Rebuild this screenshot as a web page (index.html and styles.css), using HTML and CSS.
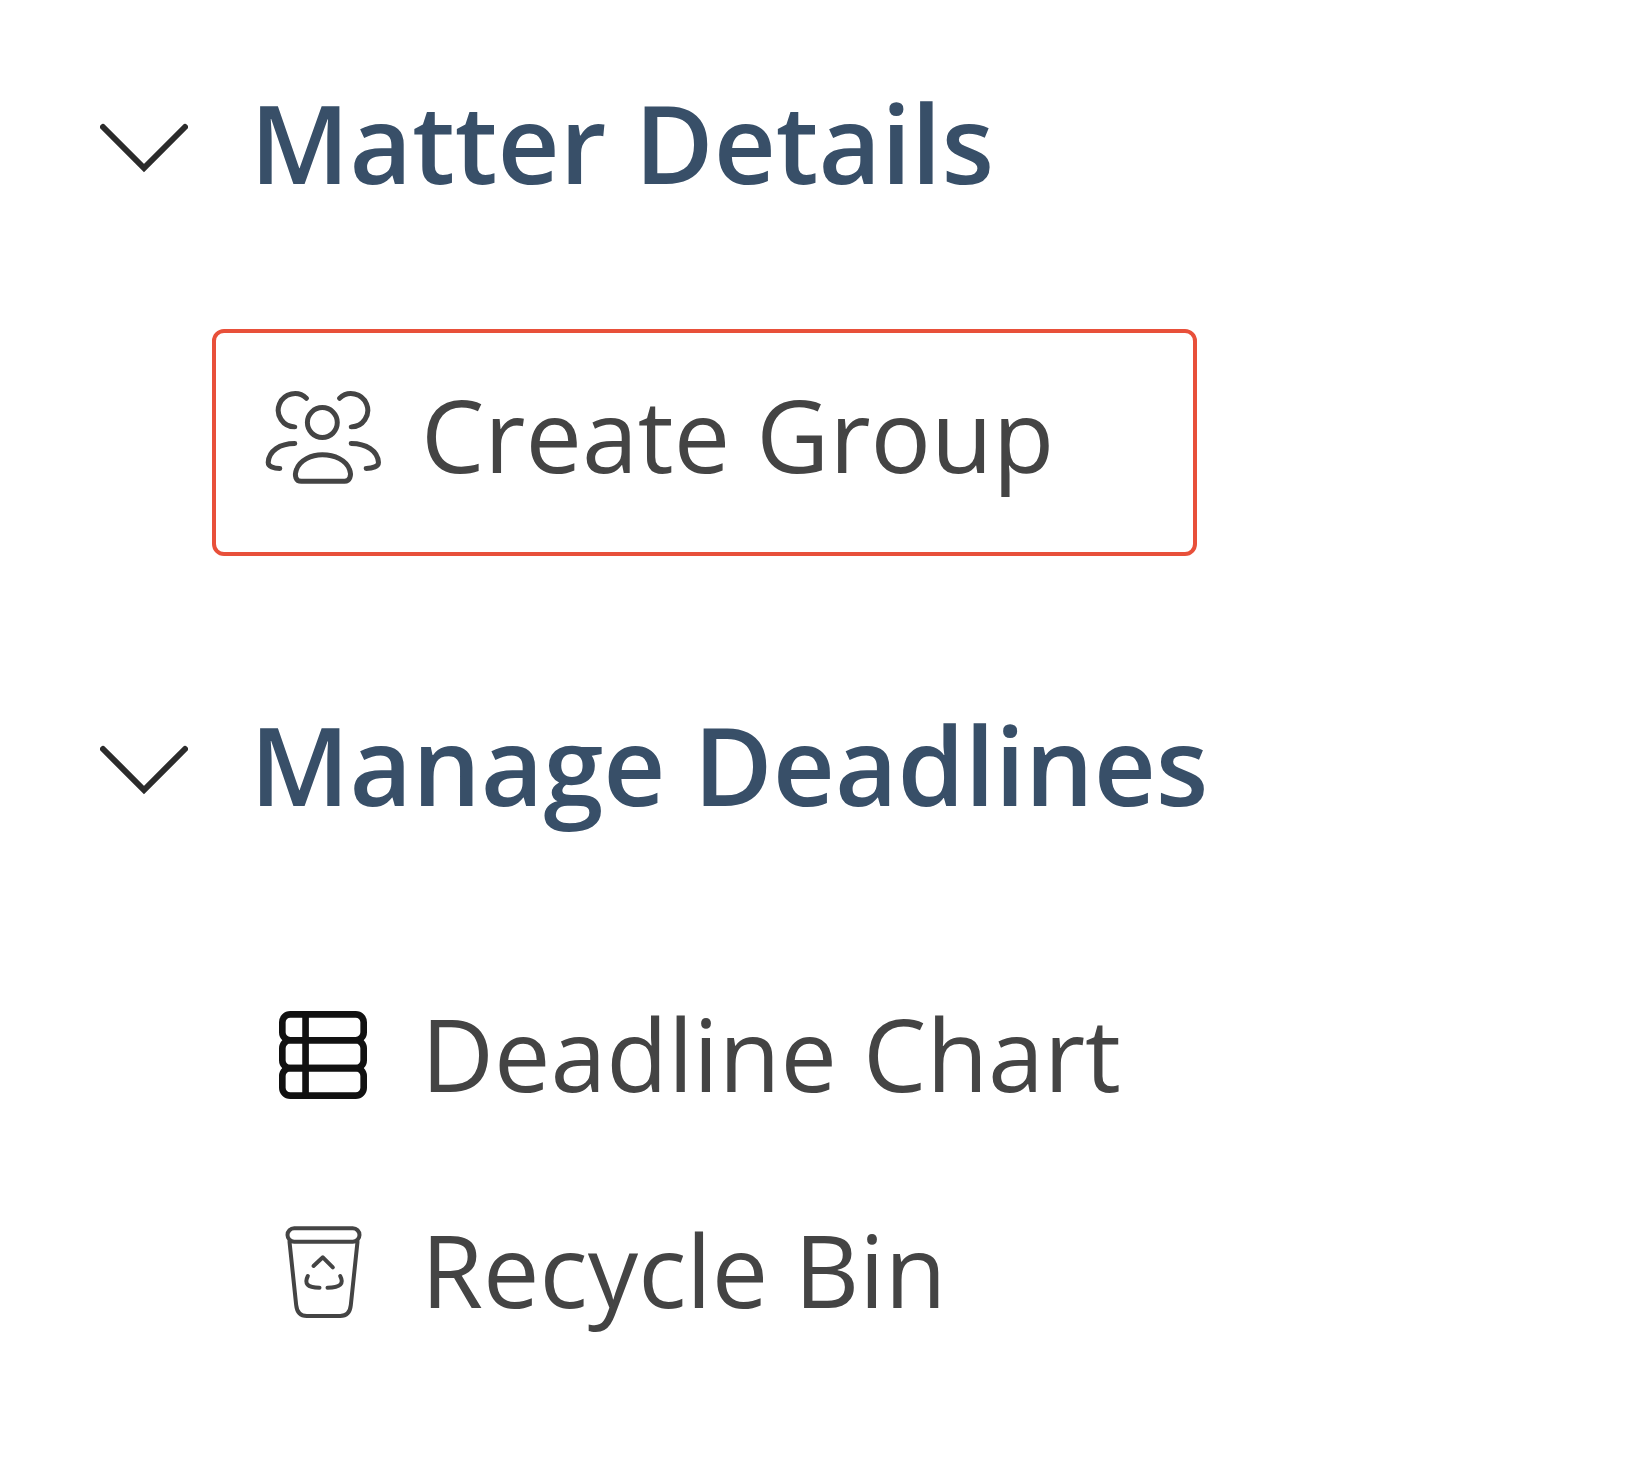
FILE: index.html
```html
<!DOCTYPE html>
<html lang="en">
<head>
    <meta charset="UTF-8">
    <title>Matter Menu</title>
    <link rel="stylesheet" href="styles.css">
</head>
<body>
    <div class="menu">
        <div class="section-head">
            <svg class="chevron" viewBox="0 0 88 50"><path d="M3 4 L44 45 L85 4"/></svg>
            <h2>Matter Details</h2>
        </div>
        <ul class="items first">
            <li class="item selected">
                <span class="icon">
                    <svg class="icon-group" viewBox="190 210 360 283">
                        <circle cx="368" cy="305" r="45"/>
                        <path d="M320 232 A50 50 0 1 0 285 318"/>
                        <path d="M420 232 A50 50 0 1 1 455 318"/>
                        <path d="M285 368 C240 368 207 390 205 425 C205 437 222 443 240 443"/>
                        <path d="M455 368 C500 368 535 390 537 425 C537 437 520 443 500 443"/>
                        <path d="M305 482 C288 482 283 465 290 447 C300 418 335 402 368 402 C405 402 440 418 450 447 C457 465 450 482 435 482 Z"/>
                    </svg>
                </span>
                Create Group
            </li>
        </ul>
        <div class="section-head">
            <svg class="chevron" viewBox="0 0 88 50"><path d="M3 4 L44 45 L85 4"/></svg>
            <h2>Manage Deadlines</h2>
        </div>
        <ul class="items second">
            <li class="item">
                <span class="icon">
                    <svg class="icon-table" viewBox="85 70 265 265">
                        <rect x="95" y="80" width="245" height="78" rx="24"/>
                        <rect x="95" y="158" width="245" height="84" rx="24"/>
                        <rect x="95" y="242" width="245" height="83" rx="24"/>
                        <path d="M165 80 V325"/>
                    </svg>
                </span>
                Deadline Chart
            </li>
            <li class="item">
                <span class="icon">
                    <svg class="icon-bin" viewBox="105 705 230 285">
                        <rect x="112" y="715" width="216" height="40" rx="20"/>
                        <path d="M118 755 L138 945 C140 965 150 978 170 978 H270 C290 978 300 965 302 945 L322 755"/>
                        <path d="M190 828 L218 802 L248 832"/>
                        <path d="M173 858 C162 880 170 893 208 893"/>
                        <path d="M270 858 C282 880 272 893 232 893"/>
                    </svg>
                </span>
                Recycle Bin
            </li>
        </ul>
    </div>
</body>
</html>
```

FILE: styles.css
```css
* {
    box-sizing: border-box;
}
body {
    margin: 0;
    background: #fff;
    font-family: "Open Sans", Arial, sans-serif;
}
.menu {
    padding: 71px 0 0 100px;
}
.section-head {
    display: flex;
    align-items: center;
    gap: 62px;
    height: 142px;
}
.section-head h2 {
    margin: 0;
    font-size: 108px;
    font-weight: 600;
    color: #384f68;
    white-space: nowrap;
}
.chevron {
    width: 88px;
    height: 50px;
    margin-top: 12px;
    fill: none;
    stroke: #2b2b2b;
    stroke-width: 6;
    stroke-linecap: round;
}
.items {
    list-style: none;
    margin: 0;
    padding: 0 0 0 112px;
}
.items.first {
    margin: 116px 0 137px;
}
.items.second {
    margin-top: 109px;
}
.item {
    display: flex;
    align-items: center;
    height: 216px;
    padding-left: 61px;
    font-size: 100.6px;
    color: #444;
    white-space: nowrap;
}
.item.selected {
    width: 985px;
    height: 227px;
    padding: 0 0 18px 57px;
    border: 4px solid #e8503a;
    border-radius: 12px;
}
.icon {
    display: flex;
    justify-content: center;
    width: 100px;
    margin-right: 48px;
}
.icon svg {
    fill: none;
    stroke-linecap: round;
    stroke-linejoin: round;
}
.icon-group {
    width: 120px;
    height: 94px;
    margin-top: 8px;
    flex-shrink: 0;
    stroke: #444;
    stroke-width: 15;
}
.icon-table {
    width: 88px;
    height: 88px;
    margin-top: 6px;
    stroke: #111;
    stroke-width: 20;
}
.icon-bin {
    width: 77px;
    height: 95px;
    margin-top: 8px;
    stroke: #444;
    stroke-width: 12;
}
```
